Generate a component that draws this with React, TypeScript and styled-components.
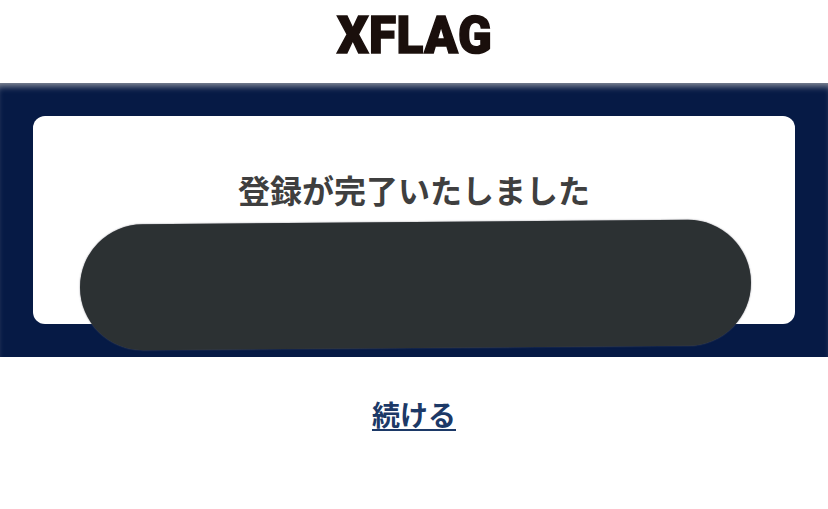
import { createGlobalStyle, styled } from 'styled-components'

const GlobalStyle = createGlobalStyle`
  html, body {
    margin: 0;
    padding: 0;
    background: #fff;
    font-family: "Noto Sans CJK JP", "Liberation Sans", sans-serif;
  }
`

const Page = styled.div`
  width: 828px;
  height: 509px;
  overflow: hidden;
  display: flex;
  flex-flow: column nowrap;
`

const Header = styled.header`
  height: 83px;
  display: flex;
  justify-content: center;
  align-items: center;
  flex: none;
`

const Logo = styled.div`
  font-family: "Roboto", "Liberation Sans", sans-serif;
  font-weight: 900;
  font-size: 52px;
  line-height: 1;
  color: #1a0f0c;
  -webkit-text-stroke: 1.5px #1a0f0c;
  letter-spacing: 0.5px;
  transform: translate(1px, -6px) scaleX(0.95);
`

const Band = styled.main`
  height: 274px;
  flex: none;
  box-sizing: border-box;
  padding: 33px 33px;
  background: #061a45;
  box-shadow: inset 0 7px 7px -4px rgba(190, 190, 190, 0.75);
  position: relative;
`

const Card = styled.section`
  height: 208px;
  box-sizing: border-box;
  padding-top: 53px;
  background: #fff;
  border-radius: 12px;
  text-align: center;
`

const Title = styled.h1`
  margin: 0;
  font-size: 32px;
  line-height: 40px;
  font-weight: 700;
  color: #3f3f3f;
`

const Redaction = styled.div`
  position: absolute;
  left: 80px;
  top: 139px;
  width: 671px;
  height: 126px;
  border-radius: 63px;
  background: #2c3133;
  box-shadow: 0 0 1.5px rgba(90, 90, 100, 0.9);
  transform: rotate(-0.45deg);
`

const Footer = styled.footer`
  display: flex;
  justify-content: center;
  padding-top: 37px;
`

const ContinueLink = styled.a`
  font-size: 28px;
  line-height: 40px;
  font-weight: 700;
  color: #1c3967;
  text-decoration: underline;
  text-decoration-thickness: 2px;
  text-underline-offset: 3px;
`

export default function App(): React.ReactElement {
  return (
    <Page>
      <GlobalStyle />
      <Header>
        <Logo>XFLAG</Logo>
      </Header>
      <Band>
        <Card>
          <Title>登録が完了いたしました</Title>
        </Card>
        <Redaction />
      </Band>
      <Footer>
        <ContinueLink href="#">続ける</ContinueLink>
      </Footer>
    </Page>
  )
}
